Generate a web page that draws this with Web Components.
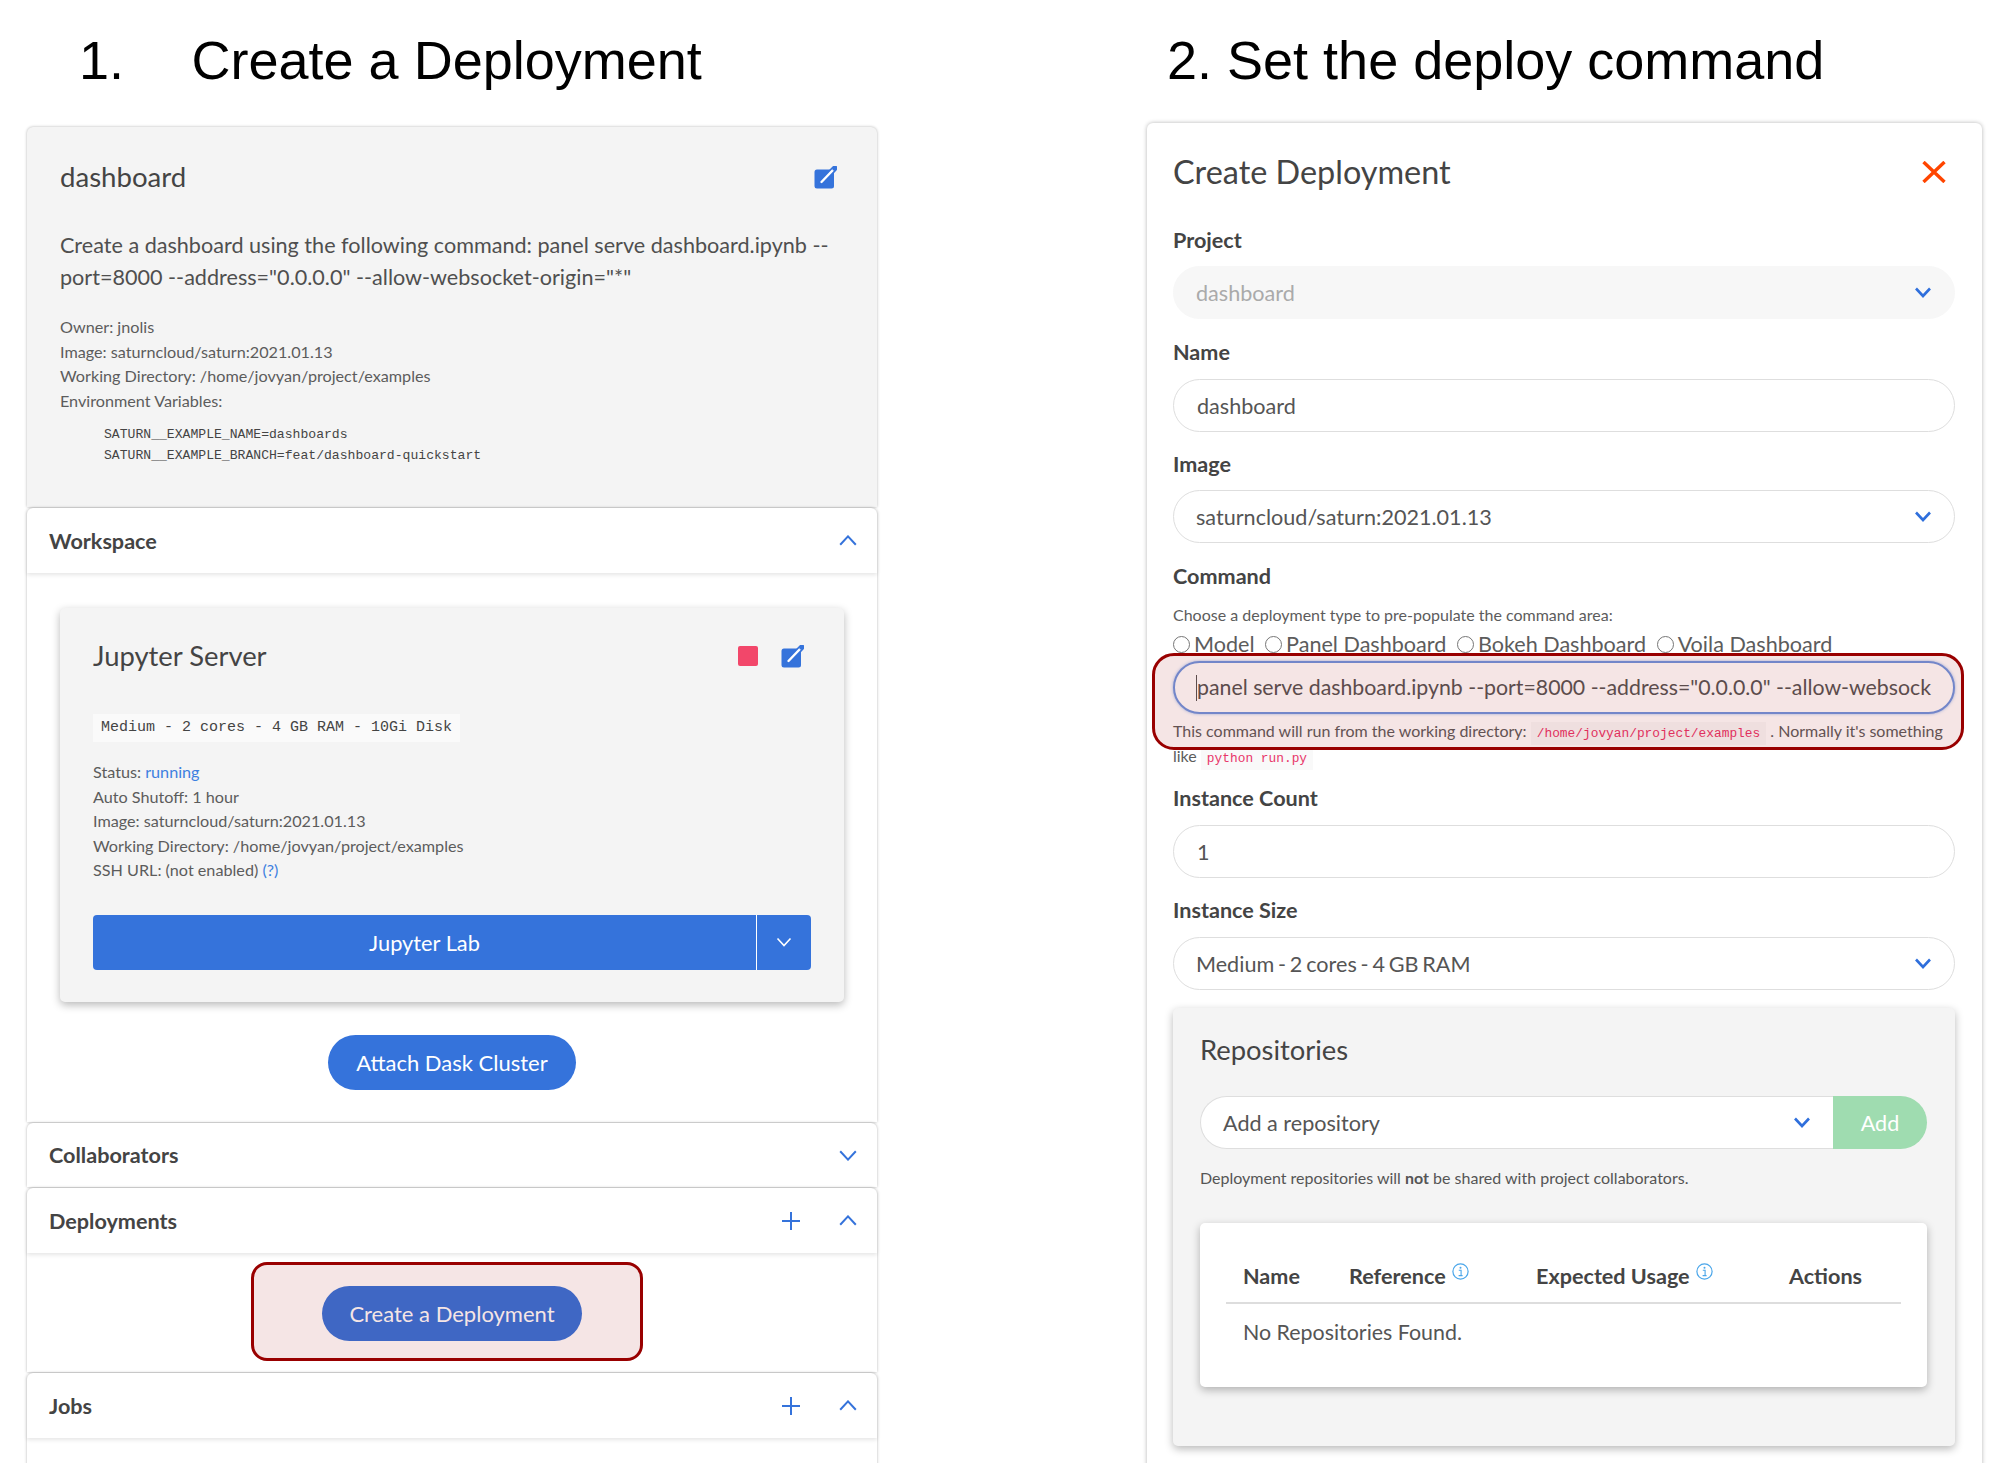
<!DOCTYPE html>
<html>
<head>
<meta charset="utf-8">
<title>Create a Deployment</title>
<style>
  html, body { margin: 0; padding: 0; background: #fff; }
  body { font-family: Lato, "Open Sans", sans-serif; color: #444; }
</style>
</head>
<body>
<app-page>
  <step-column slot="left" heading="1.&#8195;&#8197;Create a Deployment" top="127">
    <project-card title="dashboard">
      <div slot="desc">Create a dashboard using the following command: panel serve dashboard.ipynb --port=8000 --address="0.0.0.0" --allow-websocket-origin="*"</div>
      <div>Owner: jnolis</div>
      <div>Image: saturncloud/saturn:2021.01.13</div>
      <div>Working Directory: /home/jovyan/project/examples</div>
      <div>Environment Variables:</div>
      <div slot="env">SATURN__EXAMPLE_NAME=dashboards</div>
      <div slot="env">SATURN__EXAMPLE_BRANCH=feat/dashboard-quickstart</div>
    </project-card>

    <acc-section label="Workspace" open>
      <server-card title="Jupyter Server" size="Medium - 2 cores - 4 GB RAM - 10Gi Disk"></server-card>
      <div style="display:flex;justify-content:center;padding:33px 0 32px">
        <pill-button>Attach Dask Cluster</pill-button>
      </div>
    </acc-section>

    <acc-section label="Collaborators" compact></acc-section>

    <acc-section label="Deployments" open plus>
      <div style="display:flex;justify-content:center;padding:33px 0 31px">
        <pill-button style="padding:0 27px">Create a Deployment</pill-button>
      </div>
      <red-mark style="left:224px;top:9px;width:392px;height:99px"></red-mark>
    </acc-section>

    <acc-section label="Jobs" open plus>
      <div style="height:60px"></div>
    </acc-section>
  </step-column>

  <step-column slot="right" heading="2. Set the deploy command" top="123">
    <form-card title="Create Deployment">
      <form-field label="Project"><pill-box value="dashboard" select disabled></pill-box></form-field>
      <form-field label="Name"><pill-box value="dashboard" style="margin-top:14px"></pill-box></form-field>
      <form-field label="Image" style="margin-top:-1px"><pill-box value="saturncloud/saturn:2021.01.13" select></pill-box></form-field>
      <command-field></command-field>
      <form-field label="Instance Count"><pill-box value="1" style="margin-top:14px"></pill-box></form-field>
      <form-field label="Instance Size" style="margin-top:-1px"><pill-box value="Medium - 2 cores - 4 GB RAM" select style="word-spacing:-1.7px;margin-top:14px"></pill-box></form-field>
      <repo-card></repo-card>
    </form-card>
  </step-column>
</app-page>

<script>
const ICONS = {
  up: '<svg width="18" height="11" viewBox="0 0 18 11"><path d="M1.2 9.8 9 1.4l7.8 8.4" fill="none" stroke="#3573db" stroke-width="2"/></svg>',
  down: '<svg width="18" height="11" viewBox="0 0 18 11"><path d="M1.2 1.2 9 9.6l7.8-8.4" fill="none" stroke="#3573db" stroke-width="2"/></svg>',
  caret: '<svg width="18" height="11" viewBox="0 0 18 11"><path d="M2 1.5 9 9l7-7.5" fill="none" stroke="#2f6fdc" stroke-width="2.6"/></svg>',
  plus: '<svg width="18" height="18" viewBox="0 0 18 18"><path d="M9 0v18M0 9h18" fill="none" stroke="#3573db" stroke-width="2"/></svg>',
  edit: '<svg width="23" height="23" viewBox="0 0 23 23"><rect x="0.5" y="3.5" width="19.5" height="19" rx="2.5" fill="#3573db"/><path d="M7 16.5 20.5 2.5" stroke="#3573db" stroke-width="5.5" stroke-linecap="round"/><path d="M7.5 16 19 4" stroke="#fff" stroke-width="2.4" stroke-linecap="round"/><path d="M19.5 3.5 22 1" stroke="#3573db" stroke-width="2" stroke-linecap="round"/></svg>',
  close: '<svg width="24" height="22" viewBox="0 0 24 22"><path d="M1.5 1 22.5 21M22.5 1 1.5 21" stroke="#ff4500" stroke-width="3.4"/></svg>',
  info: '<svg width="17" height="17" viewBox="0 0 17 17"><circle cx="8.5" cy="8.5" r="7.6" fill="none" stroke="#4aa6ea" stroke-width="1.2"/><circle cx="8.5" cy="4.7" r="1" fill="#4aa6ea"/><path d="M6.8 7.2h2.3v5M6.6 12.6h4" fill="none" stroke="#4aa6ea" stroke-width="1.1"/></svg>'
};

function define(name, css, html) {
  customElements.define(name, class extends HTMLElement {
    connectedCallback() {
      if (this.shadowRoot) return;
      this.attachShadow({ mode: 'open' });
      this.shadowRoot.innerHTML = `<style>${css}</style>` + (typeof html === 'function' ? html(this) : html);
    }
  });
}
const attr = (el, n) => (el.getAttribute(n) || '').replace(/&/g, '&amp;').replace(/</g, '&lt;');

define('app-page', `
  :host { display: grid; grid-template-columns: 850px 835px; column-gap: 270px; padding-left: 27px; height: 1463px; overflow: hidden; box-sizing: border-box; }
`, `<slot name="left"></slot><slot name="right"></slot>`);

define('step-column', `
  :host { display: flex; flex-direction: column; min-width: 0; }
  h1 { margin: 0; font: 400 54px/1 "Liberation Sans", Arial, sans-serif; color: #000; white-space: pre; height: var(--top); padding-top: 33px; box-sizing: border-box; }
`, el => `<h1 style="--top:${el.getAttribute('top')}px;margin-left:${el.slot === 'left' ? 52 : 20}px">${attr(el, 'heading')}</h1><slot></slot>`);

define('project-card', `
  :host { display: block; background: #f4f4f4; border-radius: 6px 6px 0 0; box-shadow: 0 0 3px rgba(0,0,0,.3); padding: 32px 33px 0; height: 380px; box-sizing: border-box; position: relative; margin-bottom: 1px; }
  header { display: flex; justify-content: space-between; align-items: center; height: 36px; }
  h2 { margin: 0; font: 400 27.6px/36px Lato, sans-serif; color: #444; }
  .desc { margin-top: 34px; font-size: 21.6px; line-height: 32px; color: #4f4f4f; width: 780px; }
  .meta { margin-top: 22px; font-size: 16.2px; line-height: 24.5px; color: #5c5c5c; }
  .env { margin: 10.5px 0 0 44px; font: 13.1px/21px "Liberation Mono", monospace; color: #444; }
  .ic { margin: 0 7px 0 0; line-height: 0; }
`, el => `<header><h2>${attr(el, 'title')}</h2><span class="ic">${ICONS.edit}</span></header>
  <div class="desc"><slot name="desc"></slot></div>
  <div class="meta"><slot></slot></div>
  <div class="env"><slot name="env"></slot></div>`);

define('acc-section', `
  :host { display: block; position: relative; background: #fff; border-radius: 6px 6px 0 0; box-shadow: 0 0 3px rgba(0,0,0,.3); margin-bottom: 1px; }
  header { display: flex; align-items: center; height: 65px; padding: 0 20px 0 22px; font-size: 21.6px; font-weight: 700; color: #444; }
  :host([compact]) header { height: 64px; }
  header.shade { box-shadow: 0 2px 4px rgba(0,0,0,.1); position: relative; }
  span.t { flex: 1; }
  i { line-height: 0; display: block; }
  .plus { margin-right: 39px; }
  main { position: relative; }
`, el => `<header class="${el.hasAttribute('open') ? 'shade' : ''}"><span class="t">${attr(el, 'label')}</span>
    ${el.hasAttribute('plus') ? `<i class="plus">${ICONS.plus}</i>` : ''}
    <i>${el.hasAttribute('open') ? ICONS.up : ICONS.down}</i></header>
  ${el.childElementCount ? '<main><slot></slot></main>' : ''}`);

define('server-card', `
  :host { display: block; margin: 35px 33px 0; height: 394px; box-sizing: border-box; background: #f4f4f4; border-radius: 5px; box-shadow: 0 3px 8px rgba(0,0,0,.28); padding: 30px 33px 0; }
  header { display: flex; align-items: center; height: 36px; }
  h2 { margin: 0; flex: 1; font: 400 27.4px/36px Lato, sans-serif; color: #444; }
  .stop { width: 20px; height: 20px; background: #f2476a; border-radius: 2px; margin-right: 23px; }
  .ic { line-height: 0; margin-right: 7px; }
  code { display: inline-block; margin-top: 40px; height: 28px; padding: 0 8px; background: #fafafa; font: 15px/28px "Liberation Mono", monospace; color: #444; }
  .meta { margin-top: 18px; font-size: 16.2px; line-height: 24.5px; color: #5c5c5c; }
  a { color: #3d80e0; }
  .btn { margin-top: 32px; display: flex; height: 55px; color: #fff; border-radius: 4px; overflow: hidden; background: #3573db; font-size: 21.8px; }
  .main { flex: 1; display: flex; align-items: center; justify-content: center; }
  .more { width: 54px; border-left: 1px solid #fff; display: flex; align-items: center; justify-content: center; }
`, el => `<header><h2>${attr(el, 'title')}</h2><div class="stop"></div><span class="ic">${ICONS.edit}</span></header>
  <code>${attr(el, 'size')}</code>
  <div class="meta">
    <div>Status: <a>running</a></div>
    <div>Auto Shutoff: 1 hour</div>
    <div>Image: saturncloud/saturn:2021.01.13</div>
    <div>Working Directory: /home/jovyan/project/examples</div>
    <div>SSH URL: (not enabled) <a>(?)</a></div>
  </div>
  <div class="btn"><div class="main">Jupyter Lab</div><div class="more"><svg width="16" height="10" viewBox="0 0 16 10"><path d="M1.5 1.5 8 8.5l6.5-7" fill="none" stroke="#fff" stroke-width="1.6"/></svg></div></div>`);

define('pill-button', `
  :host { display: inline-flex; align-items: center; height: 55px; padding: 0 28px; border-radius: 28px; background: #3573db; color: #fff; font-size: 22px; }
`, `<slot></slot>`);

define('red-mark', `
  :host { position: absolute; display: block; box-sizing: border-box; border: 3px solid #990000; border-radius: 16px; background: rgba(153,0,0,.1); pointer-events: none; }
`, ``);

define('form-card', `
  :host { display: block; background: #fff; border-radius: 6px 6px 0 0; box-shadow: 0 0 4px rgba(0,0,0,.3); padding: 30px 27px 0 26px; height: 1400px; box-sizing: border-box; }
  header { display: flex; justify-content: space-between; align-items: center; height: 38px; margin-bottom: 36px; }
  h2 { margin: 0; font: 400 32.4px/38px Lato, sans-serif; color: #444; }
  i { line-height: 0; display: block; margin-right: 9px; }
`, el => `<header><h2>${attr(el, 'title')}</h2><i>${ICONS.close}</i></header><slot></slot>`);

define('form-field', `
  :host { display: block; margin-bottom: 20px; }
  label { display: block; font-size: 21.6px; font-weight: 700; line-height: 26px; margin-bottom: 13px; color: #444; }
`, el => `<label>${attr(el, 'label')}</label><slot></slot>`);

define('pill-box', `
  :host { display: flex; align-items: center; height: 53px; box-sizing: border-box; border: 1px solid #dedede; border-radius: 27px; padding: 0 22px 0 22px; font-size: 21.6px; color: #555; background: #fff; white-space: nowrap; overflow: hidden; }
  :host(:not([select])) { padding-left: 23px; }
  :host([disabled]) { background: #f7f7f7; border-color: #f7f7f7; color: #aaa; }
  span { flex: 1; }
  i { line-height: 0; }
`, el => `<span>${attr(el, 'value')}</span>${el.hasAttribute('select') ? `<i>${ICONS.caret}</i>` : ''}`);

define('command-field', `
  :host { display: block; position: relative; height: 222px; }
  label { display: block; font-size: 21.6px; font-weight: 700; line-height: 26px; color: #444; }
  .hint { margin-top: 14px; font-size: 16px; line-height: 24px; color: #5c5c5c; }
  .types { display: flex; height: 24px; margin-top: 5px; font-size: 21.6px; line-height: 24px; color: #5c5c5c; white-space: nowrap; gap: 10.5px; }
  .types span { display: flex; align-items: center; gap: 4px; }
  .types b { display: block; width: 15px; height: 15px; border: 1px solid #767676; border-radius: 50%; }
  .cmd { height: 53px; box-sizing: border-box; margin-top: 5px; border: 2px solid #6f96e0; border-radius: 27px; box-shadow: 0 0 3px rgba(53,115,219,.5); padding: 0 20px 0 21px; font-size: 21.3px; line-height: 49px; color: #555; white-space: nowrap; overflow: hidden; background: #fff; }
  .cmd s { display: inline-block; width: 1px; height: 26px; background: #555; vertical-align: -6px; text-decoration: none; }
  .help { margin-top: 4px; font-size: 16px; line-height: 25px; color: #5c5c5c; }
  code { font: 12.85px/16px "Liberation Mono", monospace; color: #e8366a; background: #f9f9f9; padding: 4px 6px; }
  red-mark { left: -21px; top: 90px; width: 812px; height: 97px; border-radius: 22px; }
`, `<label>Command</label>
  <div class="hint">Choose a deployment type to pre-populate the command area:</div>
  <div class="types"><span><b></b>Model</span><span><b></b>Panel Dashboard</span><span><b></b>Bokeh Dashboard</span><span><b></b>Voila Dashboard</span></div>
  <div class="cmd"><s></s>panel serve dashboard.ipynb --port=8000 --address="0.0.0.0" --allow-websock</div>
  <div class="help">This command will run from the working directory: <code>/home/jovyan/project/examples</code> . Normally it's something like <code>python run.py</code></div>
  <red-mark></red-mark>`);

define('repo-card', `
  :host { display: block; margin-top: -2px; height: 438px; box-sizing: border-box; background: #f4f4f4; border-radius: 5px; box-shadow: 0 3px 8px rgba(0,0,0,.28); padding: 24px 28px 0 27px; }
  h2 { margin: 0; font: 400 27.4px/36px Lato, sans-serif; color: #444; }
  .add { margin-top: 28px; display: flex; height: 53px; }
  pill-box { flex: 1; border-radius: 27px 0 0 27px; border-right: 0; }
  .go { width: 94px; background: #9fdcb0; color: #fff; font-size: 21.6px; display: flex; align-items: center; justify-content: center; border-radius: 0 27px 27px 0; }
  p { margin: 17px 0 0; font-size: 16px; line-height: 24px; color: #555; }
  .tbl { margin-top: 33px; height: 164px; box-sizing: border-box; background: #fff; border-radius: 5px; box-shadow: 0 3px 8px rgba(0,0,0,.28); padding: 28px 26px 0; }
  .head { display: grid; grid-template-columns: 106px 187px 253px 1fr; height: 51px; padding: 0 17px; border-bottom: 2px solid #ddd; font-size: 21.6px; font-weight: 700; line-height: 50px; color: #444; white-space: nowrap; }
  .head svg { vertical-align: 4px; margin-left: 6px; }
  .none { padding: 15px 17px 0; font-size: 21.4px; line-height: 26px; color: #555; }
`, `<h2>Repositories</h2>
  <div class="add"><pill-box value="Add a repository" select></pill-box><div class="go">Add</div></div>
  <p>Deployment repositories will <b>not</b> be shared with project collaborators.</p>
  <div class="tbl">
    <div class="head"><div>Name</div><div>Reference${ICONS.info}</div><div>Expected Usage${ICONS.info}</div><div>Actions</div></div>
    <div class="none">No Repositories Found.</div>
  </div>`);
</script>
</body>
</html>
